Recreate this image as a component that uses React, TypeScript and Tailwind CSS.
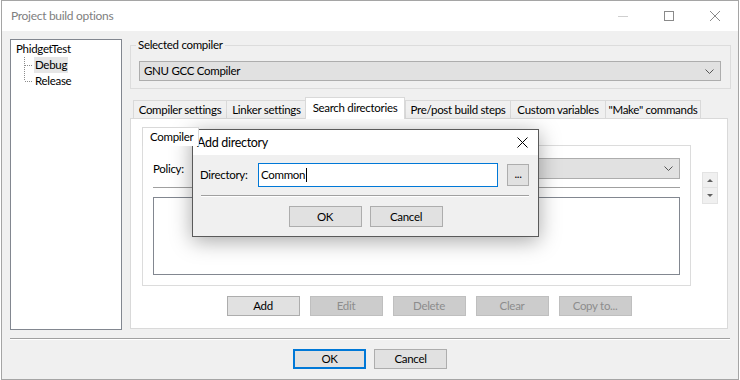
import React from "react";

function Chevron() {
  return (
    <svg width="9" height="5" viewBox="0 0 9 5">
      <path d="M0.5 0.5 L4.5 4.5 L8.5 0.5" fill="none" stroke="#555" strokeWidth="1" />
    </svg>
  );
}

function Btn({ label, disabled, primary, tall }: { label: string; disabled?: boolean; primary?: boolean; tall?: boolean }) {
  const tone = disabled
    ? "bg-[#cccccc] border-[#bfbfbf] text-[#8d8d8d]"
    : primary
      ? "bg-[#e1e1e1] border-[#0078d7] border-2 text-black"
      : "bg-[#e1e1e1] border-[#adadad] text-black";
  return (
    <div className={`flex w-[73px] items-center justify-center border ${tall ? "h-[21px]" : "h-[20px]"} ${tone}`}>
      {label}
    </div>
  );
}

const tabs = [
  { label: "Compiler settings", w: "w-[93px]" },
  { label: "Linker settings", w: "w-[80px]" },
  { label: "Search directories", w: "w-[100px]", active: true },
  { label: "Pre/post build steps", w: "w-[105px]" },
  { label: "Custom variables", w: "w-[95px]" },
  { label: "\"Make\" commands", w: "w-[96px]" },
];

export default function App() {
  return (
    <div className="relative h-[380px] w-[740px] overflow-hidden whitespace-nowrap bg-white font-['Lato',sans-serif] text-[11.5px] leading-[16px] tracking-[-0.3px] text-black">
      <div className="ml-[1px] flex h-[380px] w-[738px] flex-col border border-[#a5a5a5]">
        {/* title bar */}
        <div className="flex h-[30px] items-center bg-white pl-[9px]">
          <span className="text-[12px] text-[#808080]">Project build options</span>
          <div className="ml-auto flex h-full">
            <div className="flex w-[46px] items-center justify-center">
              <svg width="10" height="10" viewBox="0 0 10 10">
                <path d="M0 5.5 H10" stroke="#cfcfcf" strokeWidth="1" />
              </svg>
            </div>
            <div className="flex w-[46px] items-center justify-center">
              <svg width="10" height="10" viewBox="0 0 10 10">
                <rect x="0.5" y="0.5" width="9" height="9" fill="none" stroke="#8a8a8a" strokeWidth="1" />
              </svg>
            </div>
            <div className="flex w-[46px] items-center justify-center">
              <svg width="10" height="10" viewBox="0 0 10 10">
                <path d="M0 0 L10 10 M10 0 L0 10" stroke="#8a8a8a" strokeWidth="1" />
              </svg>
            </div>
          </div>
        </div>

        {/* body */}
        <div className="flex flex-1 flex-col bg-[#f0f0f0] pl-[8px] pt-[8px]">
          <div className="flex">
            {/* tree */}
            <div className="relative h-[291px] w-[112px] border border-[#828790] bg-white pt-[1px]">
              <svg className="absolute left-0 top-0" width="40" height="50">
                <path d="M13.5 17 V41 M14 25.5 H22 M14 41.5 H22" stroke="#8c8c8c" strokeWidth="1" strokeDasharray="1 1" fill="none" />
              </svg>
              <div className="h-[16px] pl-[5px]">PhidgetTest</div>
              <div className="h-[16px] pl-[23px]">
                <span className="inline-block bg-[#e6e6e6] px-[1px]">Debug</span>
              </div>
              <div className="h-[16px] pl-[24px]">Release</div>
            </div>

            {/* right column */}
            <div className="ml-[8px] flex w-[601px] flex-col">
              {/* selected compiler group */}
              <div className="relative mt-[6px] h-[44px] border border-[#dcdcdc]">
                <span className="absolute -top-[9px] left-[5px] bg-[#f0f0f0] px-[2px]">Selected compiler</span>
                <div className="ml-[8px] mr-[9px] mt-[15px] flex h-[20px] items-center justify-between border border-[#adadad] bg-[#e1e1e1] pl-[4px] pr-[6px]">
                  <span>GNU GCC Compiler</span>
                  <Chevron />
                </div>
              </div>

              {/* tabs */}
              <div className="mt-[9px] flex h-[20px] items-end pl-[3px]">
                {tabs.map((t, i) =>
                  t.active ? (
                    <div
                      key={t.label}
                      className={`relative z-10 -mb-px -ml-px flex h-[22px] items-start justify-center border-x border-t border-[#d9d9d9] bg-white pt-[2px] ${t.w}`}
                    >
                      {t.label}
                    </div>
                  ) : (
                    <div
                      key={t.label}
                      className={`flex h-[18px] items-center justify-center border-t border-l border-[#d9d9d9] bg-[#f0f0f0] ${i === tabs.length - 1 ? "border-r" : ""} ${t.w}`}
                    >
                      {t.label}
                    </div>
                  )
                )}
              </div>

              {/* tab panel */}
              <div className="flex h-[211px] w-[598px] flex-col border border-[#d9d9d9] bg-white">
                <div className="flex pl-[11px] pt-[8px]">
                  <div className="flex flex-col">
                    <div className="relative z-10 -mb-px flex h-[19px] w-[57px] items-center border-x border-t border-[#d9d9d9] bg-white pl-[7px]">
                      Compiler
                    </div>
                    <div className="h-[141px] w-[549px] border border-[#dcdcdc] bg-white pl-[10px] pt-[12px]">
                      <div className="flex h-[21px] w-[527px] items-center">
                        <span>Policy:</span>
                        <div className="ml-auto flex h-[21px] w-[480px] items-center justify-end border border-[#adadad] bg-[#e1e1e1] pr-[6px]">
                          <Chevron />
                        </div>
                      </div>
                      <div className="mt-[8px] h-px w-[527px] bg-[#a0a0a0]" />
                      <div className="mt-[9px] h-[78px] w-[527px] border border-[#828790] bg-white" />
                    </div>
                  </div>
                  <div className="ml-[11px] mt-[45px] flex flex-col">
                    <div className="flex h-[16px] w-[16px] items-center justify-center border border-[#e3e3e3] bg-[#f0f0f0]">
                      <svg width="6" height="3" viewBox="0 0 6 3">
                        <path d="M0 3 L3 0 L6 3 Z" fill="#606060" />
                      </svg>
                    </div>
                    <div className="flex h-[16px] w-[16px] items-center justify-center border border-t-0 border-[#e3e3e3] bg-[#f0f0f0]">
                      <svg width="6" height="3" viewBox="0 0 6 3">
                        <path d="M0 0 L6 0 L3 3 Z" fill="#606060" />
                      </svg>
                    </div>
                  </div>
                </div>
                <div className="mt-[10px] flex justify-center gap-[10px]">
                  <Btn label="Add" />
                  <Btn label="Edit" disabled />
                  <Btn label="Delete" disabled />
                  <Btn label="Clear" disabled />
                  <Btn label="Copy to..." disabled />
                </div>
              </div>
            </div>
          </div>

          {/* bottom separator and buttons */}
          <div className="mr-[8px] mt-[8px] h-[2px] border-t border-b border-t-[#a0a0a0] border-b-white" />
          <div className="mt-[9px] flex justify-center gap-[8px] pr-[8px]">
            <Btn label="OK" primary />
            <Btn label="Cancel" />
          </div>
        </div>
      </div>

      {/* Add directory dialog */}
      <div className="absolute left-[192px] top-[129px] flex h-[108px] w-[347px] flex-col border border-[#5a5a5a] bg-[#f0f0f0] shadow-[0_4px_20px_rgba(0,0,0,0.35)]">
        <div className="flex h-[25px] items-center bg-white pl-[4px] pr-[10px]">
          <span className="text-[12.5px]">Add directory</span>
          <svg className="ml-auto" width="11" height="11" viewBox="0 0 11 11">
            <path d="M0.5 0.5 L10.5 10.5 M10.5 0.5 L0.5 10.5" stroke="#000" strokeWidth="1" />
          </svg>
        </div>
        <div className="flex flex-col px-[7px] pt-[8px]">
          <div className="flex items-center">
            <span className="w-[58px]">Directory:</span>
            <div className="flex h-[24px] w-[240px] items-center border border-[#0078d7] bg-white pl-[2px]">
              <span>Common</span>
              <span className="ml-px h-[14px] w-px bg-black" />
            </div>
            <div className="ml-[9px] flex h-[22px] w-[22px] items-center justify-center border border-[#adadad] bg-[#e1e1e1] pb-[3px]">
              ...
            </div>
          </div>
          <div className="ml-px mt-[8px] h-[2px] w-[328px] border-t border-b border-t-[#a0a0a0] border-b-white" />
          <div className="mt-[9px] flex justify-center gap-[8px]">
            <Btn label="OK" tall />
            <Btn label="Cancel" tall />
          </div>
        </div>
      </div>
    </div>
  );
}
